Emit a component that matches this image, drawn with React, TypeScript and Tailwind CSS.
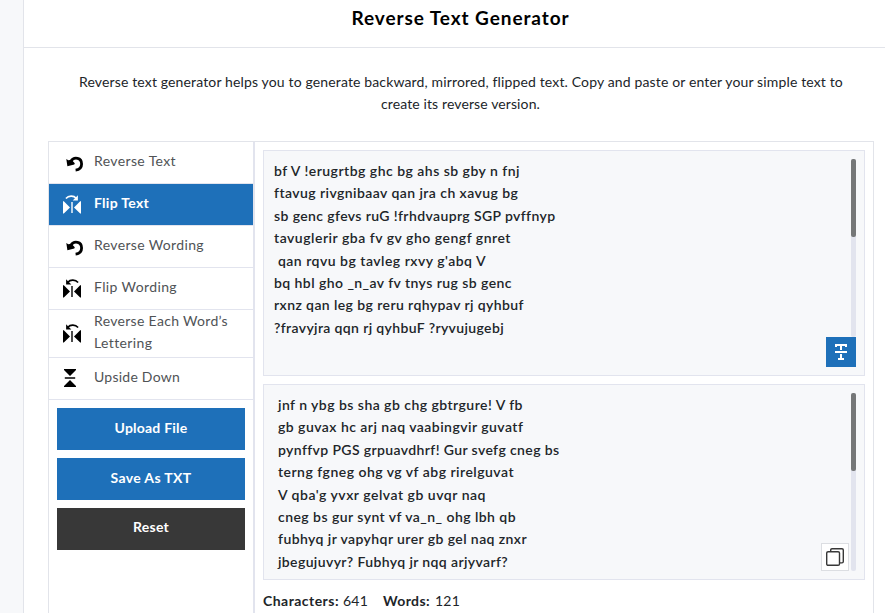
import { useLayoutEffect, useRef, useState } from 'react';
import clsx from 'clsx';

type LineProps = { text: string; width: number; className?: string };

// A single line of text whose tracking is adjusted so that it spans `width` pixels.
function Line({ text, width, className }: LineProps) {
  const ref = useRef<HTMLSpanElement>(null);
  const [tracking, setTracking] = useState(0);
  useLayoutEffect(() => {
    if (ref.current) {
      setTracking((width - ref.current.getBoundingClientRect().width) / text.length);
    }
  }, [text, width]);
  return (
    <span ref={ref} className={clsx('inline-block whitespace-pre', className)} style={{ letterSpacing: tracking }}>
      {text}
    </span>
  );
}

function UndoIcon() {
  return (
    <svg className="mt-[2px] ml-[17px] h-[16px] w-[18px] shrink-0" viewBox="0 0 18 16" fill="none">
      <path d="M5 5.2C6.4 2.8 9 1.8 11.6 2.4C14.2 3 15.6 5.2 15.6 8C15.6 11.3 13.3 13.7 9.6 14.1" stroke="currentColor" strokeWidth="2.8" />
      <path d="M0.3 3L2.3 4.3L5.5 3.8L8.8 7.2L8.3 8.4L1.4 10.3Z" fill="currentColor" />
    </svg>
  );
}

function FlipIcon({ mirrored = false }: { mirrored?: boolean }) {
  return (
    <svg className="mb-[1px] ml-[14px] h-[19px] w-[18px] shrink-0" viewBox="0 0 18 19" fill="currentColor">
      <path d="M0 6.2H0.8L7 12.4L0.8 18.6H0ZM18 6.2H17.2L11 12.4L17.2 18.6H18Z" />
      <path d="M8.3 7H9.7V18H8.3Z" />
      <g transform={mirrored ? 'matrix(-1 0 0 1 18 0)' : undefined}>
        <path d="M2.9 3.5C5.6 0.6 10.5 0.2 13.2 3.3" fill="none" stroke="currentColor" strokeWidth="1.6" />
        <path d="M14.9 0.3V5.4H9.7Z" />
      </g>
    </svg>
  );
}

function UpsideIcon() {
  return (
    <svg className="mb-[1px] ml-[15px] h-[18px] w-[12px] shrink-0" viewBox="0 0 12 18" fill="currentColor">
      <path d="M0 0H12V1.1L6 6.9L0 1.1ZM0.8 8.3H11.2V9.7H0.8ZM0 18V16.9L6 11.1L12 16.9V18Z" />
    </svg>
  );
}

type Item = { lines: [string, number][]; icon: 'undo' | 'flip' | 'upside'; active?: boolean };

const items: Item[] = [
  { lines: [['Reverse Text', 82]], icon: 'undo' },
  { lines: [['Flip Text', 55]], icon: 'flip', active: true },
  { lines: [['Reverse Wording', 110]], icon: 'undo' },
  { lines: [['Flip Wording', 83]], icon: 'flip' },
  { lines: [['Reverse Each Word’s', 134], ['Lettering', 58]], icon: 'flip' },
  { lines: [['Upside Down', 86]], icon: 'upside' },
];

const input: [string, number][] = [
  ['bf V !erugrtbg ghc bg ahs sb gby n fnj', 246],
  ['ftavug rivgnibaav qan jra ch xavug bg', 244],
  ['sb genc gfevs ruG !frhdvauprg SGP pvffnyp', 281],
  ['tavuglerir gba fv gv gho gengf gnret', 237],
  [' qan rqvu bg tavleg rxvy g\'abq V', 212],
  ['bq hbl gho _n_av fv tnys rug sb genc', 238],
  ['rxnz qan leg bg reru rqhypav rj qyhbuf', 250],
  ['?fravyjra qqn rj qyhbuF ?ryvujugebj', 230],
];

const output: [string, number][] = [
  ['jnf n ybg bs sha gb chg gbtrgure! V fb', 245],
  ['gb guvax hc arj naq vaabingvir guvatf', 245],
  ['pynffvp PGS grpuavdhrf! Gur svefg cneg bs', 281],
  ['terng fgneg ohg vg vf abg rirelguvat', 236],
  ['V qba\'g yvxr gelvat gb uvqr naq', 208],
  ['cneg bs gur synt vf va_n_ ohg lbh qb', 238],
  ['fubhyq jr vapyhqr urer gb gel naq znxr', 249],
  ['jbegujuvyr? Fubhyq jr nqq arjyvarf?', 230],
];

function TextLines({ lines }: { lines: [string, number][] }) {
  return (
    <div className="flex-1 pt-[1px] font-semibold leading-[22.4px] text-[#212529]">
      {lines.map(([text, width]) => (
        <div key={text} className="h-[22.4px]">
          <Line text={text} width={width} />
        </div>
      ))}
    </div>
  );
}

function Scrollbar() {
  return (
    <div className="w-[5px] rounded-[2px] bg-[#e2e4ee]">
      <div className="h-[78px] rounded-[2px] bg-[#757778]" />
    </div>
  );
}

export default function App() {
  return (
    <div className="flex h-[613px] w-[885px] overflow-hidden bg-[#f7f8fa] font-['Lato',sans-serif] text-[14px] text-[#212529]">
      <main className="ml-[23px] flex flex-1 flex-col border-l border-[#e2e4ea] bg-white">
        <header className="h-[48px] shrink-0 border-b border-[#e2e4ea] pl-[12px] pt-[4px] text-center">
          <h1 className="text-[19px] font-bold leading-[28px] text-black">
            <Line text="Reverse Text Generator" width={218} />
          </h1>
        </header>
        <p className="h-[93px] shrink-0 pt-[23px] leading-[22px] text-[#212529]">
          <span className="ml-[55px] block">
            <Line text="Reverse text generator helps you to generate backward, mirrored, flipped text. Copy and paste or enter your simple text to" width={764} />
          </span>
          <span className="ml-[357px] block">
            <Line text="create its reverse version." width={159} />
          </span>
        </p>
        <section className="ml-[24px] flex w-[826px] flex-1 border border-b-0 border-[#e2e4ea]">
          <aside className="w-[206px] border-r-2 border-[#e2e4ee]">
            <ul>
              {items.map((item) => (
                <li
                  key={item.lines[0][0]}
                  className={clsx(
                    'flex items-center border-b border-[#e2e4ee]',
                    item.lines.length > 1 ? 'h-[48px]' : 'h-[42px]',
                    item.active ? 'bg-[#1e70b9] font-bold text-white' : 'text-[#505356]',
                  )}
                >
                  <span className={clsx('w-[45px] shrink-0', item.active ? 'text-white' : 'text-black')}>
                    {item.icon === 'undo' && <UndoIcon />}
                    {item.icon === 'flip' && <FlipIcon mirrored={!item.active} />}
                    {item.icon === 'upside' && <UpsideIcon />}
                  </span>
                  <span className="mb-[4px] leading-[22px]">
                    {item.lines.map(([text, width]) => (
                      <span key={text} className="block">
                        <Line text={text} width={width} />
                      </span>
                    ))}
                  </span>
                </li>
              ))}
            </ul>
            <div className="flex flex-col gap-2 p-2 font-bold text-white">
              <button className="h-[42px] bg-[#1e70b9] pb-[3px]"><Line text="Upload File" width={73} /></button>
              <button className="h-[42px] bg-[#1e70b9] pb-[3px]"><Line text="Save As TXT" width={81} /></button>
              <button className="h-[42px] bg-[#383838] pb-[5px]"><Line text="Reset" width={36} /></button>
            </div>
          </aside>
          <div className="flex flex-1 flex-col gap-2 p-2">
            <div className="flex h-[226px] shrink-0 flex-col border border-[#e2e4ee] bg-[#f7f8fa] p-2">
              <div className="flex h-[178px] pl-[2px]">
                <TextLines lines={input} />
                <Scrollbar />
              </div>
              <button className="flex h-[30px] w-[30px] items-center justify-center self-end bg-[#1e70b9]">
                <svg className="h-[16px] w-[12px]" viewBox="0 0 12 16" fill="white" shapeRendering="crispEdges">
                  <path d="M0 0H12V3H10V2H7V6H5V2H2V3H0ZM0 7H12V9H0ZM5 10H7V14H9V16H3V14H5Z" />
                </svg>
              </button>
            </div>
            <div className="flex h-[196px] shrink-0 border border-[#e2e4ee] bg-[#f7f8fa] p-2 pl-[14px]">
              <TextLines lines={output} />
              <button className="mr-[2px] flex h-[28px] w-[28px] items-center justify-center self-end border border-[#dcdee2] bg-white">
                <svg className="h-[18px] w-[18px]" viewBox="0 0 18 18" fill="none" stroke="#383838" strokeWidth="1.4">
                  <path d="M4.7 3.7V2Q4.7 0.7 6 0.7H16Q17.3 0.7 17.3 2V13.6Q17.3 14.9 16 14.9H13.5" />
                  <rect x="0.7" y="3.7" width="12.8" height="13.6" rx="1.4" />
                </svg>
              </button>
              <Scrollbar />
            </div>
            <div className="flex pt-[2px] leading-[22px]">
              <b className="font-bold"><Line text="Characters:" width={76} /></b>
              <span className="ml-[4px]"><Line text="641" width={25} /></span>
              <b className="ml-[15px] font-bold"><Line text="Words:" width={47} /></b>
              <span className="ml-[5px]"><Line text="121" width={25} /></span>
            </div>
          </div>
        </section>
      </main>
    </div>
  );
}
